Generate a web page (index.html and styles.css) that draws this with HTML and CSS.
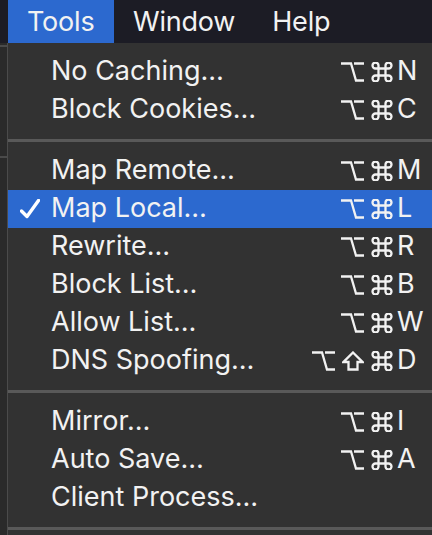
FILE: index.html
```html
<!DOCTYPE html>
<html>
<head>
	<title>Tools menu</title>
	<meta name="viewport" content="width=device-width, initial-scale=1">
	<link rel="stylesheet" href="styles.css">
</head>

<body>
	<!-- Menu bar -->
	<div class="menubar">
		<div class="baritem active">Tools</div>
		<div class="baritem">Window</div>
		<div class="baritem">Help</div>
	</div>

	<div class="screen">
		<div class="side">
			<div class="sideline first"></div>
			<div class="sideline second"></div>
		</div>

		<!-- Tools dropdown -->
		<div class="menu">
			<div class="row">
				<span class="check"></span>
				<span class="label">No Caching…</span>
				<span class="mods"><svg class="opt" viewBox="0 0 23 20"><path d="M0 1.5H10L15 18.5H23M13 1.5H23"/></svg><svg class="cmd" viewBox="0 0 22 20"><path d="M7.5 6.5V3.5A3 3 0 1 0 4.5 6.5H17.5A3 3 0 1 0 14.5 3.5V16.5A3 3 0 1 0 17.5 13.5H4.5A3 3 0 1 0 7.5 16.5Z"/></svg></span>
				<span class="key">N</span>
			</div>
			<div class="row">
				<span class="check"></span>
				<span class="label">Block Cookies…</span>
				<span class="mods"><svg class="opt" viewBox="0 0 23 20"><path d="M0 1.5H10L15 18.5H23M13 1.5H23"/></svg><svg class="cmd" viewBox="0 0 22 20"><path d="M7.5 6.5V3.5A3 3 0 1 0 4.5 6.5H17.5A3 3 0 1 0 14.5 3.5V16.5A3 3 0 1 0 17.5 13.5H4.5A3 3 0 1 0 7.5 16.5Z"/></svg></span>
				<span class="key">C</span>
			</div>

			<div class="sep"></div>

			<div class="row">
				<span class="check"></span>
				<span class="label">Map Remote…</span>
				<span class="mods"><svg class="opt" viewBox="0 0 23 20"><path d="M0 1.5H10L15 18.5H23M13 1.5H23"/></svg><svg class="cmd" viewBox="0 0 22 20"><path d="M7.5 6.5V3.5A3 3 0 1 0 4.5 6.5H17.5A3 3 0 1 0 14.5 3.5V16.5A3 3 0 1 0 17.5 13.5H4.5A3 3 0 1 0 7.5 16.5Z"/></svg></span>
				<span class="key">M</span>
			</div>
			<div class="row selected">
				<span class="check"><svg viewBox="0 0 20 20"><path d="M1.5 12L7 17.5L18.5 1.5"/></svg></span>
				<span class="label">Map Local…</span>
				<span class="mods"><svg class="opt" viewBox="0 0 23 20"><path d="M0 1.5H10L15 18.5H23M13 1.5H23"/></svg><svg class="cmd" viewBox="0 0 22 20"><path d="M7.5 6.5V3.5A3 3 0 1 0 4.5 6.5H17.5A3 3 0 1 0 14.5 3.5V16.5A3 3 0 1 0 17.5 13.5H4.5A3 3 0 1 0 7.5 16.5Z"/></svg></span>
				<span class="key">L</span>
			</div>
			<div class="row">
				<span class="check"></span>
				<span class="label">Rewrite…</span>
				<span class="mods"><svg class="opt" viewBox="0 0 23 20"><path d="M0 1.5H10L15 18.5H23M13 1.5H23"/></svg><svg class="cmd" viewBox="0 0 22 20"><path d="M7.5 6.5V3.5A3 3 0 1 0 4.5 6.5H17.5A3 3 0 1 0 14.5 3.5V16.5A3 3 0 1 0 17.5 13.5H4.5A3 3 0 1 0 7.5 16.5Z"/></svg></span>
				<span class="key">R</span>
			</div>
			<div class="row">
				<span class="check"></span>
				<span class="label">Block List…</span>
				<span class="mods"><svg class="opt" viewBox="0 0 23 20"><path d="M0 1.5H10L15 18.5H23M13 1.5H23"/></svg><svg class="cmd" viewBox="0 0 22 20"><path d="M7.5 6.5V3.5A3 3 0 1 0 4.5 6.5H17.5A3 3 0 1 0 14.5 3.5V16.5A3 3 0 1 0 17.5 13.5H4.5A3 3 0 1 0 7.5 16.5Z"/></svg></span>
				<span class="key">B</span>
			</div>
			<div class="row">
				<span class="check"></span>
				<span class="label">Allow List…</span>
				<span class="mods"><svg class="opt" viewBox="0 0 23 20"><path d="M0 1.5H10L15 18.5H23M13 1.5H23"/></svg><svg class="cmd" viewBox="0 0 22 20"><path d="M7.5 6.5V3.5A3 3 0 1 0 4.5 6.5H17.5A3 3 0 1 0 14.5 3.5V16.5A3 3 0 1 0 17.5 13.5H4.5A3 3 0 1 0 7.5 16.5Z"/></svg></span>
				<span class="key">W</span>
			</div>
			<div class="row">
				<span class="check"></span>
				<span class="label">DNS Spoofing…</span>
				<span class="mods"><svg class="opt" viewBox="0 0 23 20"><path d="M0 1.5H10L15 18.5H23M13 1.5H23"/></svg><svg class="shift" viewBox="0 0 22 20"><path d="M11 1.5L20.5 11H15.5V18.5H6.5V11H1.5Z"/></svg><svg class="cmd" viewBox="0 0 22 20"><path d="M7.5 6.5V3.5A3 3 0 1 0 4.5 6.5H17.5A3 3 0 1 0 14.5 3.5V16.5A3 3 0 1 0 17.5 13.5H4.5A3 3 0 1 0 7.5 16.5Z"/></svg></span>
				<span class="key">D</span>
			</div>

			<div class="sep"></div>

			<div class="row">
				<span class="check"></span>
				<span class="label">Mirror…</span>
				<span class="mods"><svg class="opt" viewBox="0 0 23 20"><path d="M0 1.5H10L15 18.5H23M13 1.5H23"/></svg><svg class="cmd" viewBox="0 0 22 20"><path d="M7.5 6.5V3.5A3 3 0 1 0 4.5 6.5H17.5A3 3 0 1 0 14.5 3.5V16.5A3 3 0 1 0 17.5 13.5H4.5A3 3 0 1 0 7.5 16.5Z"/></svg></span>
				<span class="key">I</span>
			</div>
			<div class="row">
				<span class="check"></span>
				<span class="label">Auto Save…</span>
				<span class="mods"><svg class="opt" viewBox="0 0 23 20"><path d="M0 1.5H10L15 18.5H23M13 1.5H23"/></svg><svg class="cmd" viewBox="0 0 22 20"><path d="M7.5 6.5V3.5A3 3 0 1 0 4.5 6.5H17.5A3 3 0 1 0 14.5 3.5V16.5A3 3 0 1 0 17.5 13.5H4.5A3 3 0 1 0 7.5 16.5Z"/></svg></span>
				<span class="key">A</span>
			</div>
			<div class="row">
				<span class="check"></span>
				<span class="label">Client Process…</span>
				<span class="mods"></span>
				<span class="key"></span>
			</div>

			<div class="sep"></div>
		</div>
	</div>
</body>
</html>
```

FILE: styles.css
```css
/* Page */
body {
  margin: 0;
  background-color: #262626;
  font-family: "Inter", "Noto Sans", sans-serif;
  color: #f2f2f2;
  overflow: hidden;
}

/* Top menu bar */
.menubar {
  display: flex;
  height: 43px;
  padding-left: 8px;
  background-color: #1c1c25;
}

.baritem {
  padding: 0 18px 0 19px;
  font-size: 27px;
  line-height: 43px;
  letter-spacing: -0.2px;
}

.baritem.active {
  width: 106px;
  box-sizing: border-box;
  background-color: #2c69cf;
}

/* Area under the bar */
.screen {
  display: flex;
}

.side {
  width: 7px;
  flex: none;
  background-color: #2a2a2a;
}

.sideline {
  height: 2px;
  background-color: #4a4a4a;
}

.sideline.first {
  margin-top: 2px;
}

.sideline.second {
  margin-top: 109px;
}

/* The dropdown */
.menu {
  flex: 1;
  border-left: 1px solid #4b4b4b;
  background-color: #323232;
  padding-top: 10px;
}

.row {
  display: flex;
  align-items: center;
  height: 38px;
  font-size: 27px;
  line-height: 38px;
}

.row.selected {
  background-color: #2c69cf;
}

.check {
  width: 43px;
  flex: none;
  display: flex;
  align-items: center;
  padding-left: 12px;
  box-sizing: border-box;
}

.check svg {
  width: 20px;
  height: 20px;
  fill: none;
  stroke: #ffffff;
  stroke-width: 3.4;
  stroke-linecap: round;
  stroke-linejoin: round;
}

.label {
  flex: 1;
  white-space: nowrap;
  position: relative;
  top: -1px;
}

.mods {
  display: flex;
  align-items: center;
  gap: 7px;
  margin-right: 4px;
}

.mods svg {
  height: 20px;
  fill: none;
  stroke: #f2f2f2;
  stroke-width: 2.3;
  stroke-linejoin: miter;
}

.mods svg.opt {
  width: 23px;
}

.mods svg.cmd,
.mods svg.shift {
  width: 22px;
}

.key {
  width: 35px;
  flex: none;
  position: relative;
  top: -1px;
}

.sep {
  height: 3px;
  margin: 10px 0;
  background-color: #595959;
}
```
